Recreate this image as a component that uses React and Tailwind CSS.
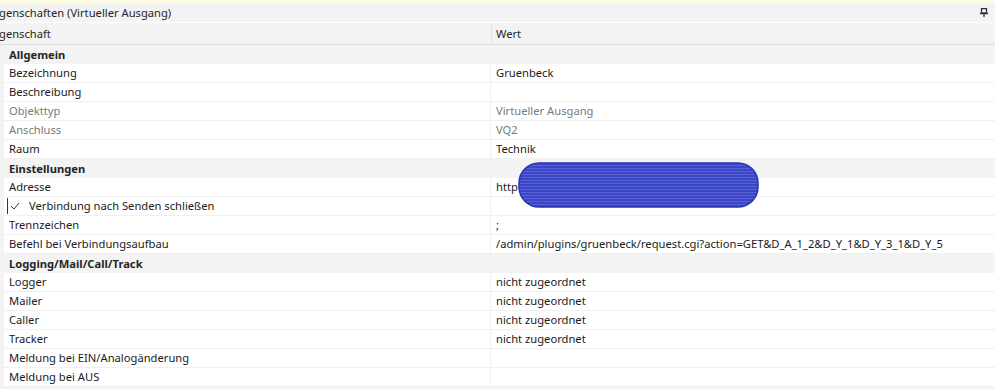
import React from "react";

const rows = [
  { cat: "Allgemein" },
  { n: "Bezeichnung", v: "Gruenbeck" },
  { n: "Beschreibung", v: "" },
  { n: "Objekttyp", v: "Virtueller Ausgang", dis: true },
  { n: "Anschluss", v: "VQ2", dis: true },
  { n: "Raum", v: "Technik" },
  { cat: "Einstellungen" },
  { n: "Adresse", v: "http" },
  { n: "Verbindung nach Senden schließen", v: "", check: true },
  { n: "Trennzeichen", v: ";" },
  { n: "Befehl bei Verbindungsaufbau", v: "/admin/plugins/gruenbeck/request.cgi?action=GET&D_A_1_2&D_Y_1&D_Y_3_1&D_Y_5" },
  { cat: "Logging/Mail/Call/Track" },
  { n: "Logger", v: "nicht zugeordnet" },
  { n: "Mailer", v: "nicht zugeordnet" },
  { n: "Caller", v: "nicht zugeordnet" },
  { n: "Tracker", v: "nicht zugeordnet" },
  { n: "Meldung bei EIN/Analogänderung", v: "" },
  { n: "Meldung bei AUS", v: "" },
];

function Row({ r }) {
  if (r.cat) {
    return (
      <div className="h-[19px] flex items-center bg-[#f3f3f3] pl-[5px] font-bold text-[#262626]">
        {r.cat}
      </div>
    );
  }
  const color = r.dis ? "text-[#7a7a7a]" : "text-[#1a1a1a]";
  return (
    <div className={`h-[19px] grid grid-cols-[487px_1fr] bg-white border-b border-[#f0f0f0] ${color}`}>
      <div className="flex items-center pl-[5px] border-r border-[#f0f0f0]">
        {r.check ? (
          <div className="flex items-center">
            <div className="w-[14px] h-[16px] border-l border-[#333] ml-[-2px] mr-[8px] flex items-center justify-center">
              <svg width="10" height="8" viewBox="0 0 10 8">
                <path d="M1 4 L4 7 L9 1" fill="none" stroke="#333" strokeWidth="1" />
              </svg>
            </div>
            <span>{r.n}</span>
          </div>
        ) : (
          r.n
        )}
      </div>
      <div className="flex items-center pl-[5px] whitespace-nowrap overflow-hidden">{r.v}</div>
    </div>
  );
}

export default function App() {
  return (
    <div
      className="w-[995px] h-[389px] bg-[#f3f3f3] overflow-hidden relative text-[11.2px] leading-none"
      style={{ fontFamily: '"Noto Sans", "Open Sans", sans-serif' }}
    >
      <div className="h-[3px] bg-[#fdfbe2]" />
      <div className="h-[20px] flex items-center justify-between text-[#262626] border-b border-white">
        <span className="ml-[-1px]">genschaften (Virtueller Ausgang)</span>
        <svg width="8" height="9" viewBox="0 0 8 9" className="mr-[7px]">
          <path d="M1.5 0.5 H6.5 V5 H1.5 Z M0 5.5 H8 M4 5.5 V9" fill="none" stroke="#333" strokeWidth="1.3" />
        </svg>
      </div>
      <div className="h-[22px] grid grid-cols-[492px_1fr] border-b border-[#dfdfdf] text-[#262626]">
        <div className="flex items-center border-r border-[#e2e2e2] ml-[-1px] pt-[1px]">genschaft</div>
        <div className="flex items-center pl-[4px] pt-[1px]">Wert</div>
      </div>
      <div className="pl-[4px]">
        {rows.map((r, i) => (
          <Row key={i} r={r} />
        ))}
      </div>
      <svg
        className="absolute left-[518px] top-[162px]"
        width="242"
        height="46"
        viewBox="0 0 242 46"
      >
        <defs>
          <pattern id="st" width="4" height="3" patternUnits="userSpaceOnUse">
            <rect width="4" height="3" fill="#3b46c6" />
            <rect width="4" height="1" fill="#5a63d6" />
          </pattern>
        </defs>
        <rect x="1" y="1" width="239" height="44" rx="20" fill="url(#st)" />
        <rect x="1" y="1" width="239" height="44" rx="20" fill="none" stroke="#2a35b8" strokeWidth="1.5" />
      </svg>
    </div>
  );
}
